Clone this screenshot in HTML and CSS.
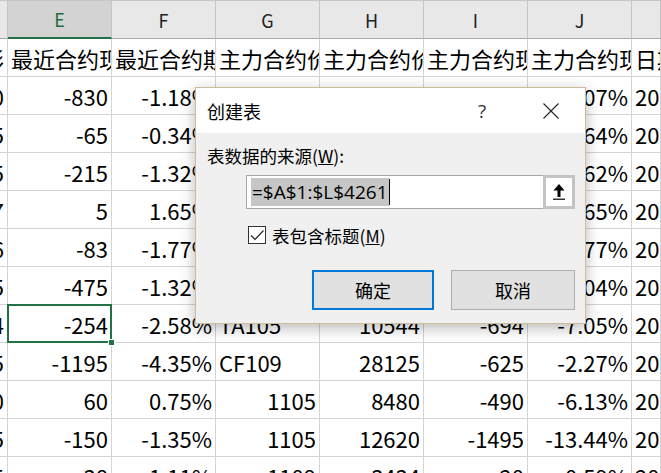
FILE: index.html
```html
<!DOCTYPE html>
<html lang="zh-CN">
<head>
  <meta charset="UTF-8" />
  <title>创建表</title>
  <link rel="stylesheet" href="styles.css">
</head>
<body>

  <div class="sheet">
    <div class="row head">
      <div class="c"></div>
      <div class="c sel">E</div>
      <div class="c">F</div>
      <div class="c">G</div>
      <div class="c">H</div>
      <div class="c">I</div>
      <div class="c">J</div>
      <div class="c"></div>
    </div>
    <div class="row">
      <div class="c n">价差情形</div>
      <div class="c">最近合约现货价差</div>
      <div class="c">最近合约期现价差率</div>
      <div class="c">主力合约价格</div>
      <div class="c">主力合约价差</div>
      <div class="c">主力合约现货价差</div>
      <div class="c">主力合约现货价差率</div>
      <div class="c">日期</div>
    </div>
    <div class="row">
      <div class="c n">70</div>
      <div class="c n">-830</div>
      <div class="c n">-1.18%</div>
      <div class="c n">1100</div>
      <div class="c n">70710</div>
      <div class="c n">-2100</div>
      <div class="c n">-2.07%</div>
      <div class="c">2021/5/19</div>
    </div>
    <div class="row">
      <div class="c n">25</div>
      <div class="c n">-65</div>
      <div class="c n">-0.34%</div>
      <div class="c n"></div>
      <div class="c n"></div>
      <div class="c n"></div>
      <div class="c n">-1.64%</div>
      <div class="c">2021/5/19</div>
    </div>
    <div class="row">
      <div class="c n">65</div>
      <div class="c n">-215</div>
      <div class="c n">-1.32%</div>
      <div class="c n"></div>
      <div class="c n"></div>
      <div class="c n"></div>
      <div class="c n">-1.62%</div>
      <div class="c">2021/5/19</div>
    </div>
    <div class="row">
      <div class="c n">37</div>
      <div class="c n">5</div>
      <div class="c n">1.65%</div>
      <div class="c n"></div>
      <div class="c n"></div>
      <div class="c n"></div>
      <div class="c n">1.65%</div>
      <div class="c">2021/5/19</div>
    </div>
    <div class="row">
      <div class="c n">16</div>
      <div class="c n">-83</div>
      <div class="c n">-1.77%</div>
      <div class="c n"></div>
      <div class="c n"></div>
      <div class="c n"></div>
      <div class="c n">-1.77%</div>
      <div class="c">2021/5/19</div>
    </div>
    <div class="row">
      <div class="c n">35</div>
      <div class="c n">-475</div>
      <div class="c n">-1.32%</div>
      <div class="c n"></div>
      <div class="c n"></div>
      <div class="c n"></div>
      <div class="c n">-1.04%</div>
      <div class="c">2021/5/19</div>
    </div>
    <div class="row">
      <div class="c n">54</div>
      <div class="c n active">-254</div>
      <div class="c n">-2.58%</div>
      <div class="c">TA105</div>
      <div class="c n">10544</div>
      <div class="c n">-694</div>
      <div class="c n">-7.05%</div>
      <div class="c">2021/5/19</div>
    </div>
    <div class="row">
      <div class="c n">15</div>
      <div class="c n">-1195</div>
      <div class="c n">-4.35%</div>
      <div class="c">CF109</div>
      <div class="c n">28125</div>
      <div class="c n">-625</div>
      <div class="c n">-2.27%</div>
      <div class="c">2021/5/19</div>
    </div>
    <div class="row">
      <div class="c n">80</div>
      <div class="c n">60</div>
      <div class="c n">0.75%</div>
      <div class="c n">1105</div>
      <div class="c n">8480</div>
      <div class="c n">-490</div>
      <div class="c n">-6.13%</div>
      <div class="c">2021/5/19</div>
    </div>
    <div class="row">
      <div class="c n">25</div>
      <div class="c n">-150</div>
      <div class="c n">-1.35%</div>
      <div class="c n">1105</div>
      <div class="c n">12620</div>
      <div class="c n">-1495</div>
      <div class="c n">-13.44%</div>
      <div class="c">2021/5/19</div>
    </div>
    <div class="row">
      <div class="c n">55</div>
      <div class="c n">38</div>
      <div class="c n">1.11%</div>
      <div class="c n">1109</div>
      <div class="c n">3434</div>
      <div class="c n">20</div>
      <div class="c n">0.59%</div>
      <div class="c">2021/5/19</div>
    </div>
  </div>

  <!-- диалог поверх таблицы -->
  <div class="dialog">
    <div class="dlg-title">
      <span class="dlg-caption">创建表</span>
      <span class="dlg-help">?</span>
      <span class="dlg-close">
        <svg width="16" height="16" viewBox="0 0 16 16"><path d="M0.5 0.5 L15.5 15.5 M15.5 0.5 L0.5 15.5" stroke="#222" stroke-width="1.1" fill="none"/></svg>
      </span>
    </div>
    <div class="dlg-body">
      <div class="dlg-label">表数据的来源(<u>W</u>):</div>
      <div class="range">
        <div class="range-field"><span class="range-sel">=$A$1:$L$4261</span><span class="caret"></span></div>
        <div class="range-btn">
          <svg width="12" height="16" viewBox="0 0 12 16"><path d="M6 0 L11.5 6.5 L7.5 6.5 L7.5 13 L4.5 13 L4.5 6.5 L0.5 6.5 Z" fill="#000"/><rect x="0" y="14.6" width="12" height="1.2" fill="#000"/></svg>
        </div>
      </div>
      <div class="check">
        <span class="box">
          <svg width="16" height="16" viewBox="0 0 16 16"><path d="M2 8.5 L6 12.5 L14.5 3.5" stroke="#222" stroke-width="1.2" fill="none"/></svg>
        </span>
        <span>表包含标题(<u>M</u>)</span>
      </div>
      <div class="dlg-buttons">
        <button class="btn default">确定</button>
        <button class="btn">取消</button>
      </div>
    </div>
  </div>

</body>
</html>
```

FILE: styles.css
```css
html, body {
  margin: 0;
  padding: 0;
  height: 100%;
  overflow: hidden;
  background: #fff;
}

body {
  position: relative;
  font-family: "Noto Sans CJK SC", sans-serif;
  color: #000;
}

/* таблица */
.sheet {
  display: flex;
  flex-direction: column;
}

.row {
  display: grid;
  grid-template-columns: 8px repeat(6, 104px) 1fr;
  height: 38px;
}

.c {
  box-sizing: border-box;
  display: flex;
  align-items: center;
  padding: 0 3px;
  border-right: 1px solid #d4d4d4;
  border-bottom: 1px solid #d4d4d4;
  overflow: hidden;
  white-space: nowrap;
  font-size: 22px;
  line-height: 1;
}

.n {
  justify-content: flex-end;
}

.row.head {
  height: 39px;
  box-sizing: border-box;
  border-top: 1px solid #c6c6c6;
  background: #e8e8e8;
}

.head .c {
  justify-content: center;
  font-size: 18px;
  color: #222;
  border-right-color: #c4c4c4;
  border-bottom-color: #a8a8a8;
}

.head .c.sel {
  background: #d3d3d3;
  color: #1e6b40;
  border-bottom: 2px solid #217346;
}

.c.active {
  position: relative;
  overflow: visible;
}

.c.active::after {
  content: "";
  position: absolute;
  left: -1px;
  top: -1px;
  right: -1px;
  bottom: -1px;
  border: 2px solid #217346;
}

.c.active::before {
  content: "";
  position: absolute;
  right: -4px;
  bottom: -4px;
  width: 5px;
  height: 5px;
  background: #217346;
  border: 1px solid #fff;
  z-index: 1;
}

/* диалог */
.dialog {
  position: absolute;
  left: 195px;
  top: 87px;
  width: 391px;
  height: 237px;
  box-sizing: border-box;
  border: 1px solid #cdbb9b;
  background: #f0f0f0;
  box-shadow: 0 4px 14px rgba(0, 0, 0, 0.28);
  display: flex;
  flex-direction: column;
}

.dlg-title {
  height: 45px;
  background: #fff;
  display: flex;
  align-items: center;
  font-size: 18px;
}

.dlg-caption {
  flex: 1;
  padding-left: 11px;
}

.dlg-help {
  width: 70px;
  text-align: center;
  font-family: "Open Sans", sans-serif;
  font-size: 19px;
  color: #333;
}

.dlg-close {
  width: 68px;
  display: flex;
  justify-content: center;
}

.dlg-body {
  padding: 11px 10px 0 11px;
  font-size: 17.5px;
}

.dlg-label {
  line-height: 24px;
}

.range {
  display: flex;
  height: 34px;
  margin: 7px 0 0 39px;
}

.range-field {
  flex: 1;
  display: flex;
  align-items: center;
  padding-left: 4px;
  background: #fff;
  border: 1px solid #a6a6a6;
  border-right: none;
}

.range-sel {
  background: #c6c6c6;
  font-family: "Open Sans", sans-serif;
  font-size: 19px;
  line-height: 28px;
  padding: 0 1px;
}

.caret {
  width: 1px;
  height: 26px;
  background: #000;
}

.range-btn {
  width: 32px;
  box-sizing: border-box;
  border: 3px solid #c4c4c4;
  background: #fff;
  display: flex;
  align-items: center;
  justify-content: center;
}

.check {
  display: flex;
  align-items: center;
  gap: 6px;
  height: 18px;
  margin: 17px 0 0 41px;
}

.box {
  width: 18px;
  height: 18px;
  box-sizing: border-box;
  border: 1px solid #333;
  background: #fff;
  display: flex;
  align-items: center;
  justify-content: center;
}

.dlg-buttons {
  display: flex;
  justify-content: flex-end;
  gap: 17px;
  margin-top: 26px;
}

.btn {
  width: 124px;
  height: 40px;
  box-sizing: border-box;
  border: 1px solid #adadad;
  background: #e1e1e1;
  font-family: "Noto Sans CJK SC", sans-serif;
  font-size: 18px;
  color: #000;
  padding: 0;
}

.btn.default {
  width: 122px;
  border: 2px solid #0078d7;
}
```
